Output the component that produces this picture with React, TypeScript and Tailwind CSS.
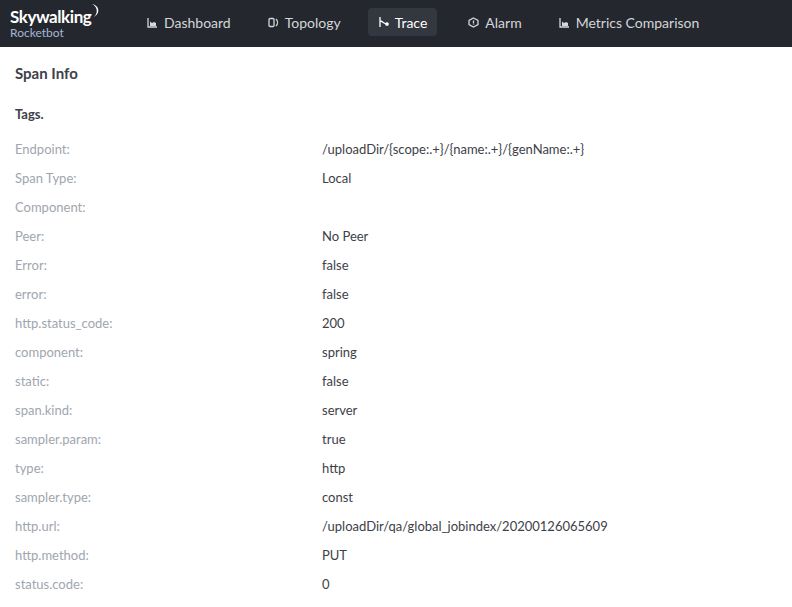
import React from "react";

const rows: [string, string][] = [
  ["Endpoint:", "/uploadDir/{scope:.+}/{name:.+}/{genName:.+}"],
  ["Span Type:", "Local"],
  ["Component:", ""],
  ["Peer:", "No Peer"],
  ["Error:", "false"],
  ["error:", "false"],
  ["http.status_code:", "200"],
  ["component:", "spring"],
  ["static:", "false"],
  ["span.kind:", "server"],
  ["sampler.param:", "true"],
  ["type:", "http"],
  ["sampler.type:", "const"],
  ["http.url:", "/uploadDir/qa/global_jobindex/20200126065609"],
  ["http.method:", "PUT"],
  ["status.code:", "0"],
];

const Chart = () => (
  <svg width="11" height="11" viewBox="0 0 11 11" fill="none" stroke="currentColor" strokeWidth="1.3">
    <path d="M1 1v9h9" />
    <path d="M3 9V4.5l2 1.5 2-1 2 1V9z" fill="currentColor" stroke="none" />
  </svg>
);

export default function App() {
  return (
    <div className="w-[792px] h-[607px] bg-white overflow-hidden" style={{ fontFamily: "Lato, 'Open Sans', sans-serif" }}>
      <div className="h-[47px] bg-[#24282e] flex items-center pl-[10px] pb-[3px] text-[14px] text-[#d3d6da]">
        <div className="flex flex-col leading-none w-[120px] pt-[3px]">
          <div className="flex items-start text-white font-bold text-[17px] tracking-tight">
            <span>Skywalking</span>
            <svg width="10" height="14" viewBox="0 0 10 14" className="-mt-[4px]"><path d="M1 0c7 1 9 9 2 13 4-4 4-10-2-13z" fill="white" /></svg>
          </div>
          <div className="text-[12px] text-[#a7b5d6] mt-[2px]">Rocketbot</div>
        </div>
        <div className="flex items-center gap-[6px] ml-[7px] px-[10px] h-[28px]"><Chart />Dashboard</div>
        <div className="flex items-center gap-[6px] ml-[17px] px-[10px] h-[28px]">
          <svg width="11" height="11" viewBox="0 0 11 11" fill="none" stroke="currentColor" strokeWidth="1.3"><rect x="1" y="1.5" width="5" height="8" rx="1" /><path d="M8 2c2 2 2 5 0 7" /></svg>
          Topology
        </div>
        <div className="flex items-center gap-[6px] ml-[17px] px-[10px] h-[28px] rounded bg-[#333840] text-white">
          <svg width="11" height="12" viewBox="0 0 11 12" fill="none" stroke="currentColor" strokeWidth="1.3"><path d="M2 1v10M2 5c3 0 3 3 7 3" /><circle cx="9" cy="8" r="1.2" fill="currentColor" /></svg>
          Trace
        </div>
        <div className="flex items-center gap-[6px] ml-[21px] px-[10px] h-[28px]">
          <svg width="11" height="11" viewBox="0 0 11 11" fill="none" stroke="currentColor" strokeWidth="1.3"><path d="M5.5 1L10 3.5v4L5.5 10 1 7.5v-4z" /><path d="M5.5 3.5v3M5.5 7.5v.5" /></svg>
          Alarm
        </div>
        <div className="flex items-center gap-[6px] ml-[17px] px-[10px] h-[28px]"><Chart />Metrics Comparison</div>
      </div>
      <div className="px-[15px]">
        <div className="text-[15px] font-bold text-[#3d4148] pt-[16px] leading-[20px]">Span Info</div>
        <div className="text-[13px] font-bold text-[#3d4148] mt-[22px] leading-[18px]">Tags.</div>
        <div className="mt-[12px] text-[13px]">
          {rows.map(([k, v]) => (
            <div key={k} className="flex h-[29px] items-center">
              <div className="w-[307px] text-[#a0a6ae]">{k}</div>
              <div className="text-[#3d4148]">{v}</div>
            </div>
          ))}
        </div>
      </div>
    </div>
  );
}
